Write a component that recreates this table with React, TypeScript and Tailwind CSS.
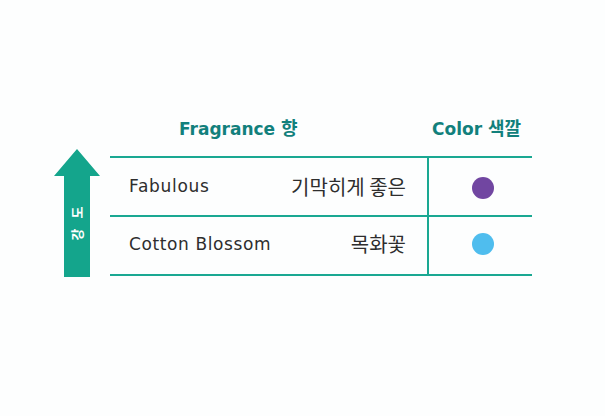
import React from "react";

const latin = { fontFamily: '"DejaVu Sans", "Noto Sans CJK KR", sans-serif' };
const kr = { fontFamily: '"Noto Sans CJK KR", sans-serif' };

export default function App() {
  return (
    <div className="relative w-[605px] h-[416px] bg-[#fdfefe] overflow-hidden" style={latin}>
      <div className="flex pt-[110px] pl-[54px]">
        <div className="w-[46px] pt-[39px] flex flex-col items-center">
          <svg width="46" height="128" viewBox="0 0 46 128" className="block">
            <polygon points="23,0 46,27 36,27 36,128 10,128 10,27 0,27" fill="#14a58c" />
          </svg>
        </div>
        <div className="ml-[10px] w-[422px] flex flex-col">
          <div className="h-[46px] flex items-center pb-[10px]">
            <div className="w-[319px] pl-[69px] text-[17px] font-bold text-[#12807c] whitespace-nowrap">
              Fragrance <span style={kr} className="text-[18px]">향</span>
            </div>
            <div className="flex-1 pl-[3px] text-[17px] font-bold text-[#12807c] whitespace-nowrap">
              Color <span style={kr} className="text-[18px]">색깔</span>
            </div>
          </div>
          <div className="border-t-2 border-b-2 border-[#1aa892]">
            <div className="flex h-[59px] border-b-2 border-[#1aa892]">
              <div className="w-[319px] border-r-2 border-[#1aa892] flex items-center justify-between pl-[19px] pr-[21px] text-[#2e2e2e]">
                <span className="mt-[1px] text-[17px] font-normal tracking-[0.7px]">Fabulous</span>
                <span className="mt-[1px] text-[20px] font-normal" style={kr}>기막히게 좋은</span>
              </div>
              <div className="flex-1 flex items-center justify-center pl-[5px]">
                <div className="w-[22px] h-[22px] rounded-full bg-[#7146a1] mt-[2px]" />
              </div>
            </div>
            <div className="flex h-[57px]">
              <div className="w-[319px] border-r-2 border-[#1aa892] flex items-center justify-between pl-[19px] pr-[21px] text-[#2e2e2e]">
                <span className="-mt-[2px] text-[17px] font-normal tracking-[0.6px]">Cotton Blossom</span>
                <span className="-mt-[3px] text-[20px] font-normal" style={kr}>목화꽃</span>
              </div>
              <div className="flex-1 flex items-center justify-center pl-[5px]">
                <div className="w-[22px] h-[22px] rounded-full bg-[#4fbdee] -mt-[3px]" />
              </div>
            </div>
          </div>
        </div>
      </div>
      <div className="absolute left-[55px] top-[203px] w-[44px] h-[40px] flex items-center justify-center">
        <span className="-rotate-90 text-[13px] font-bold text-white tracking-[10px] pl-[10px] whitespace-nowrap leading-none" style={kr}>강도</span>
      </div>
    </div>
  );
}
